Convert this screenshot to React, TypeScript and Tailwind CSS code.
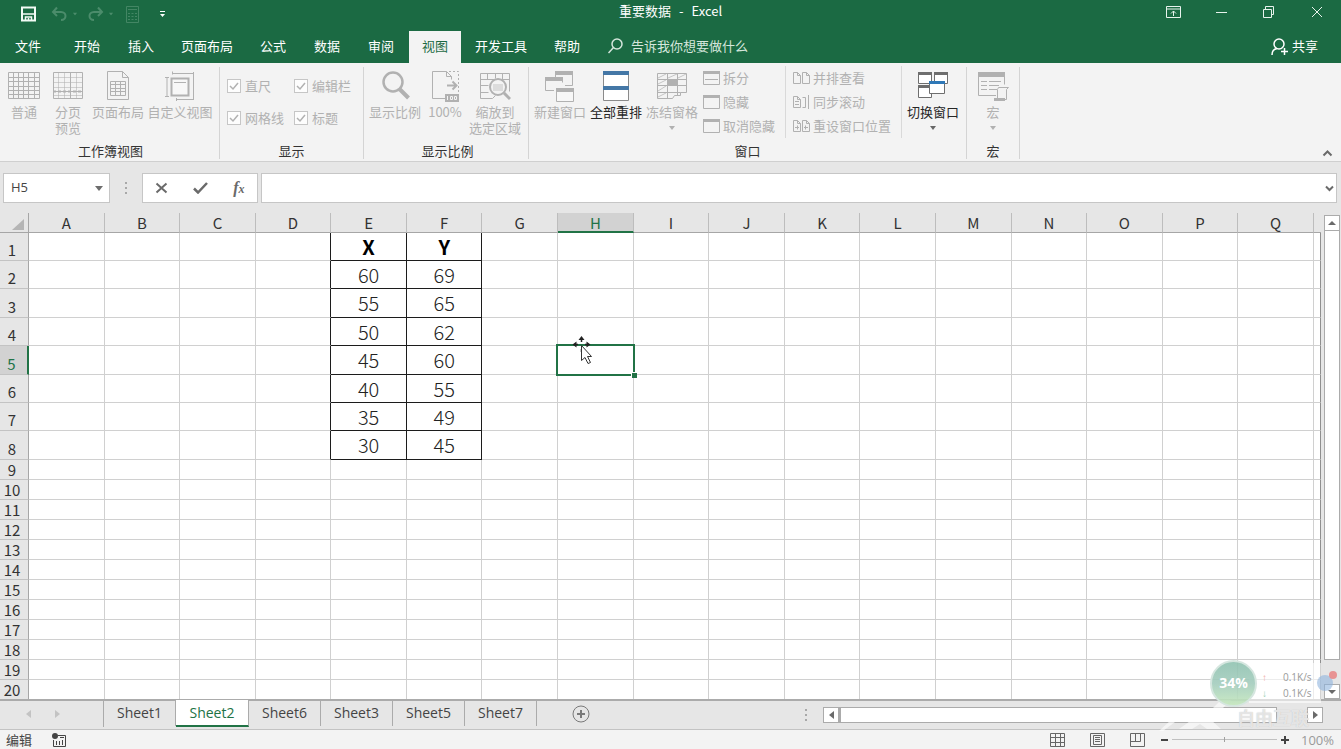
import { useState } from "react";
import type { ReactNode } from "react";
import clsx from "clsx";

const COLUMNS = "ABCDEFGHIJKLMNOPQ".split("");

// rows 1-8 hold the enlarged data, the rest keep the default height
const ROW_HEIGHTS = [
  "h-[28px]",
  "h-[28px]",
  "h-[29px]",
  "h-[28px]",
  "h-[29px]",
  "h-[28px]",
  "h-[28px]",
  "h-[29px]",
];
const ROWS = Array.from({ length: 20 }, (_, i) => i + 1);

const DATA: [string, string][] = [
  ["X", "Y"],
  ["60", "69"],
  ["55", "65"],
  ["50", "62"],
  ["45", "60"],
  ["40", "55"],
  ["35", "49"],
  ["30", "45"],
];

const MENU = [
  "开始",
  "插入",
  "页面布局",
  "公式",
  "数据",
  "审阅",
  "视图",
  "开发工具",
  "帮助",
];

const SHEETS = ["Sheet1", "Sheet2", "Sheet6", "Sheet3", "Sheet5", "Sheet7"];

interface IconProps {
  children: ReactNode;
  w?: number;
  h?: number;
  className?: string;
}

const Icon = ({ children, w = 32, h = 32, className }: IconProps) => (
  <svg
    width={w}
    height={h}
    viewBox={`0 0 ${w} ${h}`}
    fill="none"
    stroke="currentColor"
    className={clsx("shrink-0", className)}
    aria-hidden="true"
  >
    {children}
  </svg>
);

const Caret = ({ className }: { className?: string }) => (
  <Icon w={6} h={4} className={className}>
    <path d="M0 0h6L3 4z" fill="currentColor" stroke="none" />
  </Icon>
);

/* ---------- ribbon icons ---------- */

const NormalIcon = () => (
  <Icon>
    <path d="M.5 2.5h31v26H.5zM.5 7.5h31M.5 11.5h31M.5 16.5h31M.5 20.5h31M.5 24.5h31M5.5 2.5v26M10.5 2.5v26M15.5 2.5v26M20.5 2.5v26M26.5 2.5v26" />
  </Icon>
);

const PageBreakIcon = () => (
  <Icon>
    <path d="M1.5 2.5h29v26h-29zM1.5 21.5h29M18.5 2.5v26" />
    <path
      d="M1.5 7.5h29M1.5 12.5h29M1.5 17.5h29M1.5 25.5h29M6.5 2.5v26M12.5 2.5v26M24.5 2.5v26"
      strokeOpacity=".55"
    />
    <path d="M1 21.5h30" strokeDasharray="3 2" strokeWidth="2" />
  </Icon>
);

const PageLayoutIcon = () => (
  <Icon>
    <path d="M5.500 1.500h15l6 6v22h-21zM20.500 1.500v6h6" />
    <path d="M8.500 11.500h15v14h-15zM8.500 14.500h15M8.500 18.500h15M8.500 21.500h15M13.500 11.500v14M18.500 11.500v14" />
  </Icon>
);

const CustomViewIcon = () => (
  <Icon>
    <path d="M1 7.500h4M1 26.500h4M3 7v20M8 3.500h22M8.500 1.500v3M29.500 2v28M12 29.500h18M12.500 28v3" />
    <path d="M7.500 8.500h17v17h-17z" strokeWidth="2" fill="#f7f7f7" />
    <path d="M10 12.500h12" />
  </Icon>
);

const ZoomIcon = () => (
  <Icon>
    <circle cx="14" cy="12" r="9.500" strokeWidth="2.500" />
    <path d="M20.500 19l9 9" strokeWidth="4" />
  </Icon>
);

const HundredIcon = () => (
  <Icon>
    <path d="M17 28.500H3.500v-27h14l5 5v3M17.500 1.500v5h5" />
    <path d="M20 1.500h9.500v22" strokeDasharray="2 2" />
    <path d="M18 15.500h9M23.500 11.500l4 4-4 4" strokeWidth="2" />
    <path d="M16 24h14v8H16z" fill="currentColor" stroke="none" />
    <path d="M18.500 26v4M21.500 26.500h2v3h-2zM25.500 26.500h2v3h-2z" stroke="#f3f3f3" />
  </Icon>
);

const ZoomSelectionIcon = () => (
  <Icon>
    <path d="M1.500 28.500h12l3-3M1.500 28.500v-25h29v18M1.500 9.500h29M1.500 15.500h8M1.500 22.500h8M8.500 3.500v6M16.500 3.500v5M23.500 3.500v6" />
    <circle cx="19" cy="17" r="8" strokeWidth="2" fill="#f3f3f3" />
    <path d="M14 14h10v7H14z" fill="currentColor" fillOpacity=".35" stroke="none" />
    <path d="M25 23l6 6" strokeWidth="3" />
  </Icon>
);

const NewWindowIcon = () => (
  <Icon>
    <path d="M11.500 8V2.500h17v13H21" />
    <path d="M11 1h18v4H11z" fill="currentColor" stroke="none" />
    <path d="M10 20.500H1.500v-13h17v5" />
    <path d="M1 7h18v4H1z" fill="currentColor" stroke="none" />
    <path d="M12.500 19.500h17v12h-17z" fill="#f7f7f7" />
    <path d="M12 18h18v4H12z" fill="currentColor" stroke="none" />
  </Icon>
);

const ArrangeIcon = () => (
  <Icon>
    <path d="M3.500 1.500h25v29h-25z" stroke="#8a8a8a" fill="#fff" />
    <path d="M3 1h26v4H3zM3 16h26v4H3z" fill="#4477a6" stroke="none" />
  </Icon>
);

const FreezeIcon = () => (
  <Icon>
    <path d="M1.500 28.500v-25h29v19h-6v3h-6l-2 3zM1.500 9.500h29M1.500 15.500h29M1.500 22.500h23M11.500 3.500v25M21.500 3.500v22" />
    <path
      d="M2 8l8-4M12 8l9-4M22 8l8-4M2 14l8-4M2 21l8-5M2 27l8-4"
      strokeOpacity=".7"
    />
    <path d="M12 10h9v5h-9z" fill="currentColor" stroke="none" />
  </Icon>
);

const SwitchIcon = () => (
  <Icon className="text-[#6e6e6e]">
    <path d="M1.500 3.500h13v10h-13zM17.500 3.500h13v10h-13zM1.500 16.500h13v11h-13z" fill="#fff" />
    <path d="M1 2h14v3H1zM17 2h14v3H17zM1 15h14v3H1z" fill="currentColor" stroke="none" />
    <path d="M12.500 12.500h15v11h-15z" fill="#fff" />
    <path d="M12 11h16v3H12z" fill="#2f78b7" stroke="none" />
  </Icon>
);

const MacroIcon = () => (
  <Icon>
    <path d="M19 25.500H1.500v-23h26v12" />
    <path d="M1 2h27v5H1z" fill="currentColor" stroke="none" />
    <path d="M4 11.500h6M12 11.500h12M4 15.500h6M12 15.500h10M4 19.500h6M12 19.500h8" />
    <path d="M21.500 17.500h10l-2 2v10h-9v-10z" fill="#f3f3f3" />
    <path d="M17 28h11v3H17z" fill="currentColor" stroke="none" />
  </Icon>
);

const PaneIcon = ({ split }: { split?: boolean }) => (
  <Icon w={17} h={14}>
    <path d="M.5.500h16v13H.5z" />
    <path d="M0 0h17v3H0z" fill="currentColor" stroke="none" />
    {split && <path d="M2 8.500h13" />}
  </Icon>
);

const PagesIcon = ({ bar, marks }: { bar?: boolean; marks?: boolean }) => (
  <Icon w={17} h={14}>
    <path d="M.5 1.500h4l3 3v8h-7zM4.500 1.500v3h3" />
    {bar ? (
      <path d="M9.500 2.500h3v10h-3M15.500 0v14M2 6.500h4M2 9.500h4" />
    ) : (
      <path d="M9.500 1.500h4l3 3v8h-7zM13.500 1.500v3h3" />
    )}
    {marks && <path d="M2 8.500h4M4.500 6.500v4M11 8.500h4M12.500 6.500v4" />}
  </Icon>
);

/* ---------- ribbon pieces ---------- */

interface RibbonButtonProps {
  icon: ReactNode;
  label: string;
  width: string;
  active?: boolean;
  menu?: boolean;
}

const RibbonButton = ({ icon, label, width, active, menu }: RibbonButtonProps) => (
  <button
    type="button"
    disabled={!active}
    className={clsx(
      "flex shrink-0 flex-col items-center leading-4",
      width,
      active ? "text-[#262626]" : "text-[#b1b1b1]"
    )}
  >
    {icon}
    <span className="mt-0.5 whitespace-pre text-center">{label}</span>
    {menu && <Caret className={clsx("mt-1.5", active && "text-[#666]")} />}
  </button>
);

const SmallButton = ({ icon, label }: { icon: ReactNode; label: string }) => (
  <button
    type="button"
    disabled
    className="flex h-6 items-center gap-[3px] whitespace-nowrap text-[#b1b1b1]"
  >
    {icon}
    {label}
  </button>
);

const RibbonCheck = ({ label }: { label: string }) => (
  <label className="flex h-8 items-center gap-1 text-[#b1b1b1]">
    <span className="relative flex">
      <input
        type="checkbox"
        defaultChecked
        disabled
        className="size-[14px] appearance-none border border-[#c6c6c6] bg-[#fdfdfd]"
      />
      <Icon w={14} h={14} className="absolute inset-0">
        <path d="M3 7l3 3 5-6" strokeWidth="1.500" />
      </Icon>
    </span>
    {label}
  </label>
);

interface GroupProps {
  title: string;
  className: string;
  children: ReactNode;
}

const Group = ({ title, className, children }: GroupProps) => (
  <section
    className={clsx(
      "mb-0.5 mt-1 flex shrink-0 flex-col border-r border-[#d4d4d4]",
      className
    )}
  >
    <div className="flex min-h-0 flex-1 pt-[3px]">{children}</div>
    <h2 className="h-4 shrink-0 text-center leading-4 text-[#333]">{title}</h2>
  </section>
);

const Ribbon = () => (
  <div className="flex h-[99px] shrink-0 border-b border-[#cfcfcf] bg-[#f3f3f3]">
    <Group title="工作簿视图" className="w-[220px] pl-0.5">
      <RibbonButton icon={<NormalIcon />} label="普通" width="w-11" />
      <RibbonButton icon={<PageBreakIcon />} label={"分页\n预览"} width="w-11" />
      <RibbonButton icon={<PageLayoutIcon />} label="页面布局" width="w-14" />
      <RibbonButton icon={<CustomViewIcon />} label="自定义视图" width="w-[68px]" />
    </Group>
    <Group title="显示" className="w-[144px]">
      <div className="grid grid-cols-[67px_auto] content-start pl-[7px]">
        {["直尺", "编辑栏", "网格线", "标题"].map((label) => (
          <RibbonCheck key={label} label={label} />
        ))}
      </div>
    </Group>
    <Group title="显示比例" className="w-[165px] pl-[3px]">
      <RibbonButton icon={<ZoomIcon />} label="显示比例" width="w-14" />
      <RibbonButton icon={<HundredIcon />} label="100%" width="w-11" />
      <RibbonButton icon={<ZoomSelectionIcon />} label={"缩放到\n选定区域"} width="w-14" />
    </Group>
    <Group title="窗口" className="w-[438px]">
      <div className="flex pl-[3px]">
        <RibbonButton icon={<NewWindowIcon />} label="新建窗口" width="w-14" />
        <RibbonButton icon={<ArrangeIcon />} label="全部重排" width="w-14" active />
        <RibbonButton icon={<FreezeIcon />} label="冻结窗格" width="w-14" menu />
      </div>
      <div className="-mt-1 flex w-[86px] flex-col self-start border-r border-[#d9d9d9] pl-[3px]">
        <SmallButton icon={<PaneIcon split />} label="拆分" />
        <SmallButton icon={<PaneIcon />} label="隐藏" />
        <SmallButton icon={<PaneIcon />} label="取消隐藏" />
      </div>
      <div className="-mt-1 flex w-[116px] flex-col self-start border-r border-[#d9d9d9] pl-[7px]">
        <SmallButton icon={<PagesIcon />} label="并排查看" />
        <SmallButton icon={<PagesIcon bar />} label="同步滚动" />
        <SmallButton icon={<PagesIcon marks />} label="重设窗口位置" />
      </div>
      <div className="pl-[3px]">
        <RibbonButton icon={<SwitchIcon />} label="切换窗口" width="w-14" active menu />
      </div>
    </Group>
    <Group title="宏" className="w-[53px]">
      <RibbonButton icon={<MacroIcon />} label="宏" width="w-full" menu />
    </Group>
    <button
      type="button"
      aria-label="折叠功能区"
      className="mb-1 ml-auto mr-2 self-end text-[#6a6a6a]"
    >
      <Icon w={11} h={8}>
        <path d="M1.500 6.500l4-4 4 4" strokeWidth="2" />
      </Icon>
    </button>
  </div>
);

/* ---------- header ---------- */

const Header = () => (
  <header className="flex h-[63px] shrink-0 flex-col bg-[#1b6a43] text-white">
    <div className="relative flex h-[31px] items-start justify-between">
      <div className="flex h-7 items-center pl-5">
        <button type="button" aria-label="保存">
          <Icon w={17} h={16} className="text-[#f3fbf6]">
            <path d="M2 1.500h13v13H2z" strokeWidth="2" />
            <path d="M3 8h11M5.500 15v-4h6v4M8.500 12v3" strokeWidth="1.500" />
          </Icon>
        </button>
        <button
          type="button"
          aria-label="撤消"
          disabled
          className="ml-3.5 flex items-center gap-[5px] text-[#4b8c6b]"
        >
          <Icon w={16} h={16}>
            <path d="M6 1.500L2 6l4 4M2 6h8c6 0 6 8 0 8" strokeWidth="2" />
          </Icon>
          <Caret className="scale-75" />
        </button>
        <button
          type="button"
          aria-label="恢复"
          disabled
          className="ml-2.5 flex items-center gap-1 text-[#4b8c6b]"
        >
          <Icon w={16} h={16}>
            <path d="M10 1.500L14 6l-4 4M14 6H6c-6 0-6 8 0 8" strokeWidth="2" />
          </Icon>
          <Caret className="scale-75" />
        </button>
        <button type="button" aria-label="计算器" disabled className="ml-3 text-[#438664]">
          <Icon w={13} h={17}>
            <path d="M.5.500h12v16H.5zM2 3.500h9M2 7.500h2M5.500 7.500h2M9 7.500h2M2 10.500h2M5.500 10.500h2M9 10.500h2M2 13.500h2M5.500 13.500h2M9 13.500h2" />
          </Icon>
        </button>
        <button type="button" aria-label="自定义快速访问工具栏" className="ml-5">
          <Icon w={7} h={8}>
            <path d="M1 1.500h5" />
            <path d="M1 4h5L3.500 7z" fill="currentColor" stroke="none" />
          </Icon>
        </button>
      </div>
      <h1 className="pointer-events-none absolute inset-x-0 top-px text-center leading-5">
        重要数据<span className="mx-2">-</span>Excel
      </h1>
      <div className="flex h-6 items-center text-[#e8f3ed]">
        <button type="button" aria-label="功能区显示选项" className="flex w-12 justify-center">
          <Icon w={15} h={12}>
            <path d="M.5.500h14v11H.5zM.5 3h14M7.500 10V5M5 7.500L7.500 5l2.500 2.500" />
          </Icon>
        </button>
        <button type="button" aria-label="最小化" className="flex w-12 justify-center">
          <Icon w={11} h={12}>
            <path d="M0 6.500h11" />
          </Icon>
        </button>
        <button type="button" aria-label="还原" className="flex w-12 justify-center">
          <Icon w={12} h={12}>
            <path d="M.5 3.500h8v8h-8zM2.500 3.500v-3h8v8h-2" />
          </Icon>
        </button>
        <button type="button" aria-label="关闭" className="flex w-12 justify-center">
          <Icon w={12} h={12}>
            <path d="M1 1l10 10M11 1L1 11" />
          </Icon>
        </button>
      </div>
    </div>
    <nav className="flex h-8 items-stretch whitespace-nowrap">
      <button type="button" className="w-14 pb-0.5">
        文件
      </button>
      <div className="ml-1 flex">
        {MENU.map((item) => (
          <button
            key={item}
            type="button"
            className={clsx(
              "mx-px pb-0.5",
              item.length > 2 ? "w-[76px]" : "w-[52px]",
              item === "视图" && "bg-[#f3f3f3] text-[#1b6a43]"
            )}
          >
            {item}
          </button>
        ))}
      </div>
      <label className="ml-3.5 flex items-center gap-2 pb-0.5 text-[#d5e6dc]">
        <Icon w={15} h={16}>
          <circle cx="9" cy="6" r="5" strokeWidth="1.500" />
          <path d="M5.500 9.500L.5 15" strokeWidth="1.500" />
        </Icon>
        <input
          type="text"
          placeholder="告诉我你想要做什么"
          className="w-40 bg-transparent outline-none placeholder:text-[#d5e6dc]"
        />
      </label>
      <button type="button" className="ml-auto mr-[23px] flex items-center gap-1 pb-0.5">
        <Icon w={17} h={17}>
          <circle cx="8" cy="6" r="5" strokeWidth="1.500" />
          <path d="M1 17c0-4 2-6 5-6.500M13.500 10v7M10 13.500h7" strokeWidth="1.500" />
        </Icon>
        共享
      </button>
    </nav>
  </header>
);

const Grip = () => (
  <Icon w={2} h={12} className="text-[#a8a8a8]">
    <path d="M0 1h2M0 6h2M0 11h2" strokeWidth="2" />
  </Icon>
);

const FormulaBar = () => (
  <div className="flex h-[51px] shrink-0 items-start bg-[#e6e6e6] pl-[3px] pr-1 pt-[11px]">
    <div className="flex h-[30px] w-[107px] shrink-0 items-center border border-[#c6c6c6] bg-white pl-[7px] pr-1.5">
      <input
        type="text"
        aria-label="名称框"
        defaultValue="H5"
        className="min-w-0 flex-1 font-['Open_Sans',sans-serif] text-[#444] outline-none"
      />
      <button type="button" aria-label="名称列表" className="text-[#6d6d6d]">
        <Icon w={8} h={5}>
          <path d="M0 0h8L4 5z" fill="currentColor" stroke="none" />
        </Icon>
      </button>
    </div>
    <div className="flex h-[30px] w-8 shrink-0 items-center justify-center">
      <Grip />
    </div>
    <div className="flex h-[30px] w-[116px] shrink-0 items-center justify-around border border-[#c6c6c6] bg-white text-[#6a6a6a]">
      <button type="button" aria-label="取消">
        <Icon w={13} h={12}>
          <path d="M1.500 1.500l10 9M11.500 1.500l-10 9" strokeWidth="2" />
        </Icon>
      </button>
      <button type="button" aria-label="输入">
        <Icon w={15} h={12}>
          <path d="M1 6.500l4 4L14 1" strokeWidth="2.500" />
        </Icon>
      </button>
      <button
        type="button"
        aria-label="插入函数"
        className="font-['Liberation_Serif',serif] text-base font-bold italic leading-4"
      >
        f<span className="text-xs">x</span>
      </button>
    </div>
    <div className="ml-[3px] flex h-[30px] flex-1 items-center border border-[#c6c6c6] bg-white pr-0.5">
      <input type="text" aria-label="编辑栏" className="min-w-0 flex-1 px-2 outline-none" />
      <button type="button" aria-label="展开编辑栏" className="text-[#6a6a6a]">
        <Icon w={9} h={7}>
          <path d="M1 1.500l3.500 3.500L8 1.500" strokeWidth="2" />
        </Icon>
      </button>
    </div>
  </div>
);

/* ---------- sheet ---------- */

const Cursor = () => (
  <svg
    width="28"
    height="32"
    viewBox="0 0 28 32"
    className="absolute -top-3.5 left-2.5 z-10"
    aria-hidden="true"
  >
    <path
      d="M13.500 7v3M7 12.500h3M17 12.500h3M13.500 17v3"
      stroke="#222"
      strokeWidth="1.500"
      fill="none"
    />
    <path d="M13.500 4l-3 4h6zM4.500 12.500l4-3v6zM22.500 12.500l-4-3v6z" fill="#222" />
    <path
      d="M13.500 13.500v15l3.500-3 3 6 2.500-1-3-6h4z"
      fill="#fff"
      stroke="#333"
    />
  </svg>
);

const cellText = (col: string, row: number) => {
  if (row > DATA.length) return "";
  if (col === "E") return DATA[row - 1][0];
  if (col === "F") return DATA[row - 1][1];
  return "";
};

const Grid = () => (
  <table className="w-full table-fixed border-separate border-spacing-0 bg-white">
    <colgroup>
      <col className="w-[29px]" />
      {COLUMNS.map((col) => (
        <col key={col} />
      ))}
      <col className="w-[7px]" />
    </colgroup>
    <thead>
      <tr className="h-5 bg-[#e6e6e6] text-[15px] leading-[18px] text-[#333]">
        <th className="border-b border-r border-[#a6a6a6] p-0">
          <Icon w={12} h={11} className="ml-auto mr-1 mt-1 text-[#b5b5b5]">
            <path d="M12 0v11H0z" fill="currentColor" stroke="none" />
          </Icon>
        </th>
        {COLUMNS.map((col) => (
          <th
            key={col}
            scope="col"
            className={clsx(
              "border-r border-r-[#bdbdbd] p-0 font-normal",
              col === "H"
                ? "border-b-2 border-b-[#217346] bg-[#d2d2d2] pt-px leading-[17px] text-[#217346]"
                : "border-b border-b-[#a6a6a6] pt-px"
            )}
          >
            {col}
          </th>
        ))}
        <th className="border-b border-b-[#a6a6a6] p-0" />
      </tr>
    </thead>
    <tbody>
      {ROWS.map((row) => {
        const inData = row <= DATA.length;
        return (
          <tr key={row} className={ROW_HEIGHTS[row - 1] ?? "h-5"}>
            <th
              scope="row"
              className={clsx(
                "border-b border-b-[#c3c3c3] p-0 pr-1 align-bottom text-[15px] font-normal leading-[18px]",
                inData && "pb-px",
                row === 5
                  ? "border-r-2 border-r-[#217346] bg-[#d2d2d2] text-[#217346]"
                  : "border-r border-r-[#a6a6a6] bg-[#e6e6e6] text-[#333]"
              )}
            >
              {row}
            </th>
            {COLUMNS.map((col) => {
              const filled = inData && (col === "E" || col === "F");
              const selected = row === 5 && col === "H";
              return (
                <td
                  key={col}
                  className={clsx(
                    "border-b border-r p-0 text-center text-[20px] leading-[26px]",
                    filled ? "border-b-[#1c1c1c]" : "border-b-[#d0d0d0]",
                    filled || (inData && col === "D")
                      ? "border-r-[#1c1c1c]"
                      : "border-r-[#d0d0d0]",
                    row === 1 ? "font-bold text-black" : "font-light text-[#222]",
                    selected && "relative"
                  )}
                >
                  {cellText(col, row)}
                  {selected && (
                    <>
                      <span className="absolute -inset-0.5 border-2 border-[#217346]" />
                      <span className="absolute -bottom-1 -right-1 size-[6px] border-l border-t border-white bg-[#217346]" />
                      <Cursor />
                    </>
                  )}
                </td>
              );
            })}
            <td className="border-b border-r border-b-[#d0d0d0] border-r-[#8f8f8f] p-0" />
          </tr>
        );
      })}
    </tbody>
  </table>
);

const VerticalScroll = () => (
  <div className="flex w-5 shrink-0 flex-col items-center bg-[#e6e6e6] pl-0.5 pt-0.5">
    <button
      type="button"
      aria-label="向上滚动"
      className="flex size-4 items-center justify-center border border-[#ababab] bg-white text-[#6a6a6a]"
    >
      <Icon w={8} h={4}>
        <path d="M0 4h8L4 0z" fill="currentColor" stroke="none" />
      </Icon>
    </button>
    <div className="mb-6 w-4 flex-1 border border-t-0 border-[#ababab] bg-white" />
    <button
      type="button"
      aria-label="向下滚动"
      className="flex h-[15px] w-4 shrink-0 items-center justify-center border border-[#ababab] bg-white text-[#6a6a6a]"
    >
      <Icon w={8} h={4}>
        <path d="M0 0h8L4 4z" fill="currentColor" stroke="none" />
      </Icon>
    </button>
  </div>
);

const SheetTabs = () => {
  const [active, setActive] = useState("Sheet2");
  return (
    <div className="flex h-[31px] shrink-0 items-start border-b border-t-2 border-b-[#c3c3c3] border-t-[#ababab] bg-[#e6e6e6]">
      <div className="flex h-[26px] w-[103px] shrink-0 items-center gap-6 pl-[26px] text-[#c3c3c3]">
        <button type="button" aria-label="上一个工作表" disabled>
          <Icon w={5} h={8}>
            <path d="M5 0v8L0 4z" fill="currentColor" stroke="none" />
          </Icon>
        </button>
        <button type="button" aria-label="下一个工作表" disabled>
          <Icon w={5} h={8}>
            <path d="M0 0v8l5-4z" fill="currentColor" stroke="none" />
          </Icon>
        </button>
      </div>
      <div className="flex border-l border-[#ababab] font-['Open_Sans',sans-serif] text-sm">
        {SHEETS.map((sheet) => (
          <button
            key={sheet}
            type="button"
            onClick={() => setActive(sheet)}
            className={clsx(
              "border-r border-[#ababab] leading-5",
              sheet === active
                ? "-mt-px h-[27px] w-[73px] border-b-2 border-b-[#217346] bg-white text-[#217346]"
                : "h-[25px] w-[72px] pb-0.5 text-[#444]"
            )}
          >
            {sheet}
          </button>
        ))}
      </div>
      <button type="button" aria-label="新工作表" className="ml-[35px] mt-1 text-[#7a7a7a]">
        <Icon w={18} h={18}>
          <circle cx="9" cy="9" r="8" />
          <path d="M9 5v8M5 9h8" strokeWidth="2" />
        </Icon>
      </button>
      <div className="ml-auto mr-[18px] mt-1.5 flex w-[518px] items-center">
        <Grip />
        <button
          type="button"
          aria-label="向左滚动"
          className="ml-4 flex size-4 shrink-0 items-center justify-center border border-[#ababab] bg-white text-[#6a6a6a]"
        >
          <Icon w={5} h={8}>
            <path d="M5 0v8L0 4z" fill="currentColor" stroke="none" />
          </Icon>
        </button>
        <div className="mr-[30px] h-4 flex-1 border border-l-2 border-[#ababab] bg-white" />
        <button
          type="button"
          aria-label="向右滚动"
          className="flex size-4 shrink-0 items-center justify-center border border-[#ababab] bg-white text-[#6a6a6a]"
        >
          <Icon w={5} h={8}>
            <path d="M0 0v8l5-4z" fill="currentColor" stroke="none" />
          </Icon>
        </button>
      </div>
    </div>
  );
};

const StatusBar = () => (
  <footer className="flex h-[19px] shrink-0 items-center bg-[#f3f3f3] pl-1.5 pr-1.5 text-[#444]">
    <span className="leading-[18px]">编辑</span>
    <button type="button" aria-label="录制宏" className="ml-5">
      <Icon w={14} h={14}>
        <path d="M6 2.500h7.500v11h-12V7M8 4.500h4M4.500 8v4M7.500 8v4M10.500 7v5" />
        <circle cx="3" cy="3" r="3" fill="currentColor" stroke="none" />
      </Icon>
    </button>
    <div className="ml-auto flex items-center gap-[25px] text-[#666]">
      <button type="button" aria-label="普通视图">
        <Icon w={15} h={14}>
          <path d="M.5.500h14v13H.5zM.5 4.500h14M.5 9.500h14M5.500.500v13M10.500.500v13" />
        </Icon>
      </button>
      <button type="button" aria-label="页面布局视图">
        <Icon w={15} h={14}>
          <path d="M.5.500h14v13H.5zM3.500 2.500h8v9h-8zM5 4.500h5M5 6.500h5M5 8.500h5" />
        </Icon>
      </button>
      <button type="button" aria-label="分页预览视图">
        <Icon w={15} h={14}>
          <path d="M.5.500h14v13H.5zM5.500.500v8M.5 8.500h10M10.500.500v8" />
        </Icon>
      </button>
    </div>
    <button type="button" aria-label="缩小" className="ml-4">
      <Icon w={7} h={8}>
        <path d="M0 4h7" strokeWidth="2" />
      </Icon>
    </button>
    <input
      type="range"
      aria-label="显示比例滑块"
      min={10}
      max={190}
      defaultValue={100}
      className="mx-1 h-3 w-[105px] appearance-none bg-transparent bg-[linear-gradient(#c0c0c0,#c0c0c0)] bg-[length:100%_1px] bg-center bg-no-repeat [&::-webkit-slider-thumb]:h-[5px] [&::-webkit-slider-thumb]:w-px [&::-webkit-slider-thumb]:appearance-none [&::-webkit-slider-thumb]:bg-[#a0a0a0]"
    />
    <button type="button" aria-label="放大">
      <Icon w={8} h={8}>
        <path d="M0 4h8M4 0v8" strokeWidth="2" />
      </Icon>
    </button>
    <span className="ml-3 w-[34px] font-['Open_Sans',sans-serif] leading-[18px] text-[#9a9a9a]">
      100%
    </span>
  </footer>
);

// floating speed meter that sits over the bottom right corner
const SpeedWidget = () => (
  <div className="pointer-events-none absolute bottom-[42px] right-0 flex h-12 w-[131px] items-center font-['Open_Sans',sans-serif]">
    <div className="z-10 flex size-[47px] items-center justify-center rounded-full border-2 border-[#d5e6df] bg-linear-to-b from-[#8fc2b0]/90 via-[#a3ccbd]/90 to-[#c5e8bd]/90 text-sm font-bold text-white">
      34%
    </div>
    <div className="-ml-2 mr-5 h-10 flex-1 bg-white/60 pl-[13px] text-[10px] leading-4 text-[#9a9a9a]">
      <p className="flex items-center gap-4 whitespace-nowrap pt-1.5">
        <span className="text-[#f0a8a0]">↑</span>0.1K/s
      </p>
      <p className="flex items-center gap-4 whitespace-nowrap">
        <span className="text-[#98cfb2]">↓</span>0.1K/s
      </p>
    </div>
    <div className="absolute right-2 top-4 size-4 rounded-full bg-[#8fb4dd]/60" />
    <div className="absolute right-1 top-3 size-2 rounded-full bg-[#e88a8a]/90" />
  </div>
);

const Watermark = () => (
  <div className="pointer-events-none absolute bottom-4 right-8 flex items-end gap-1 text-white/60">
    <Icon w={76} h={42}>
      <path
        d="M2 40L26 18h14l8 7L64 9h10L54 29l10 9H50l-7-5-8 5H22l14-10-6-6L6 40z"
        fill="currentColor"
        stroke="none"
      />
    </Icon>
    <span className="text-lg font-bold leading-8 [text-shadow:0_0_1px_#bbb]">
      自由互联
    </span>
  </div>
);

const App = () => (
  <div className="relative flex h-screen flex-col overflow-hidden bg-[#e6e6e6] font-['Noto_Sans_CJK_SC',sans-serif] text-[13px]">
    <Header />
    <Ribbon />
    <FormulaBar />
    <main className="flex min-h-0 flex-1 overflow-hidden">
      <div className="min-w-0 flex-1 overflow-hidden">
        <Grid />
      </div>
      <VerticalScroll />
    </main>
    <SheetTabs />
    <StatusBar />
    <SpeedWidget />
    <Watermark />
  </div>
);

export default App;
